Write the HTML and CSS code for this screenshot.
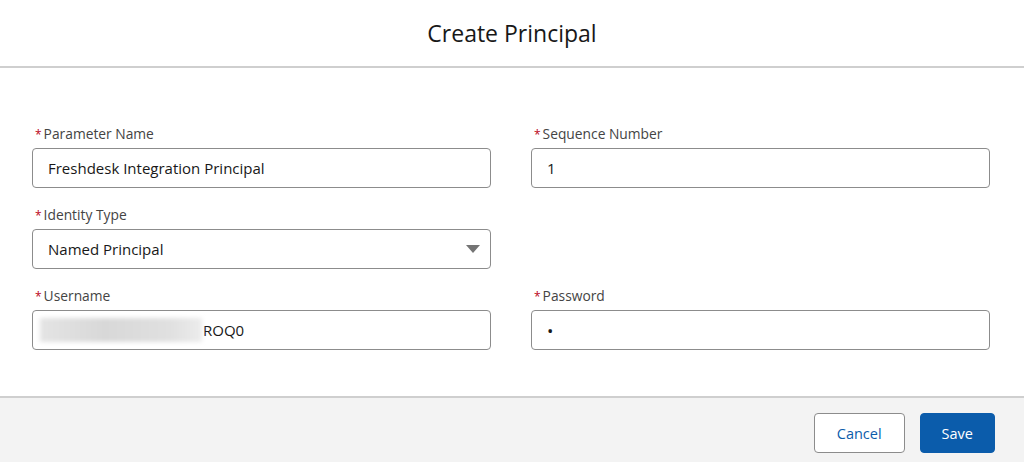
FILE: index.html
```html
<!DOCTYPE html>
<html lang="en">

<head>
    <meta charset="UTF-8">
    <meta name="viewport" content="width=device-width, initial-scale=1.0">
    <title>Create Principal</title>
    <link rel="stylesheet" href="styles.css">
</head>

<body>
    <div class="modal">
        <div class="header">
            <h2>Create Principal</h2>
        </div>
        <div class="content">
            <div class="form">
                <div class="field">
                    <label><abbr>*</abbr>Parameter Name</label>
                    <div class="input">Freshdesk Integration Principal</div>
                </div>
                <div class="field">
                    <label><abbr>*</abbr>Sequence Number</label>
                    <div class="input">1</div>
                </div>
                <div class="field">
                    <label><abbr>*</abbr>Identity Type</label>
                    <div class="input select">Named Principal
                        <span class="caret"></span>
                    </div>
                </div>
                <div class="field empty"></div>
                <div class="field">
                    <label><abbr>*</abbr>Username</label>
                    <div class="input user">
                        <span class="blur"></span><span class="rest">ROQ0</span>
                    </div>
                </div>
                <div class="field">
                    <label><abbr>*</abbr>Password</label>
                    <div class="input pass">&bull;</div>
                </div>
            </div>
        </div>
        <div class="footer">
            <button class="button">Cancel</button>
            <button class="button primary">Save</button>
        </div>
    </div>
</body>

</html>
```

FILE: styles.css
```css
html,
body {
    height: 100%;
    margin: 0;
}

body {
    font-family: "Open Sans", "Noto Sans", sans-serif;
    color: #181818;
    background-color: #fff;
}

.modal {
    display: flex;
    flex-direction: column;
    height: 100%;
}

.header {
    height: 66px;
    display: flex;
    align-items: center;
    justify-content: center;
    border-bottom: 2px solid #cfcfcf;
}

.header h2 {
    margin: 0;
    font-size: 23px;
    font-weight: 400;
    color: #181818;
}

.content {
    flex: 1;
    padding: 56px 34px 0 32px;
}

.form {
    display: grid;
    grid-template-columns: 1fr 1fr;
    column-gap: 40px;
    row-gap: 17px;
}

.field label {
    display: block;
    height: 20px;
    line-height: 20px;
    margin-bottom: 4px;
    font-size: 13.8px;
    color: #444;
}

.field abbr {
    color: #ba0517;
    margin: 0 2px 0 3px;
    font-size: 12px;
}

.input {
    display: flex;
    align-items: center;
    height: 38px;
    padding: 0 15px;
    border: 1px solid #8c8c8c;
    border-radius: 4px;
    font-size: 15px;
    color: #181818;
}

.select {
    justify-content: space-between;
}

.caret {
    width: 0;
    height: 0;
    margin-right: -5px;
    border-left: 7px solid transparent;
    border-right: 7px solid transparent;
    border-top: 8px solid #747474;
}

.user {
    padding-left: 7px;
}

.blur {
    display: block;
    width: 162px;
    height: 24px;
    background: linear-gradient(90deg, #e4e4e4, #d8d8d8 40%, #e0e0e0 80%, #ececec);
    filter: blur(2px);
}

.rest {
    margin-left: 1px;
}

.pass {
    font-size: 17px;
}

.footer {
    display: flex;
    justify-content: flex-end;
    align-items: flex-start;
    gap: 15px;
    height: 49px;
    padding: 15px 29px 0 0;
    background-color: #f3f3f3;
    border-top: 2px solid #cfcfcf;
}

.button {
    height: 40px;
    padding: 0 22px;
    font-family: "Open Sans", "Noto Sans", sans-serif;
    font-size: 14.5px;
    color: #0b5cab;
    background-color: #fff;
    border: 1px solid #8c8c8c;
    border-radius: 4px;
    outline: none;
    cursor: pointer;
}

.button.primary {
    padding: 0 21px;
    color: #fff;
    background-color: #0b5cab;
    border-color: #0b5cab;
}
```
